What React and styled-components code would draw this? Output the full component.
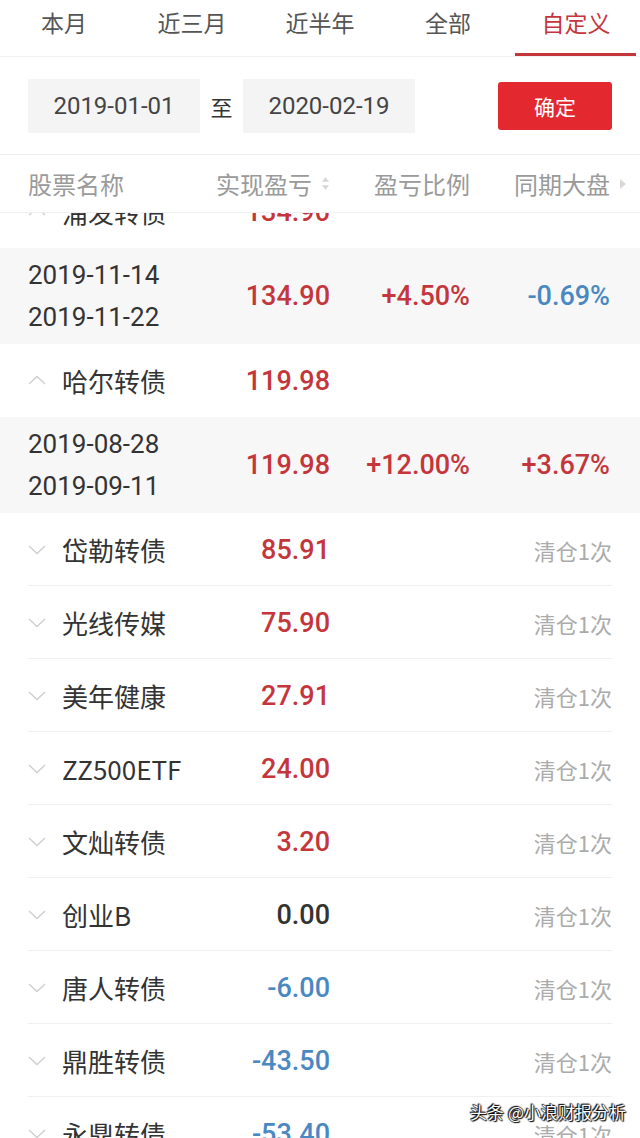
import styled, { createGlobalStyle } from "styled-components";

const GlobalStyle = createGlobalStyle`
  html, body {
    margin: 0;
    padding: 0;
    background: #ffffff;
  }
  body {
    font-family: "Noto Sans CJK SC", "Noto Sans", sans-serif;
    color: #333333;
  }
`;

const RED = "#c4363c";
const BLUE = "#4a88c2";
const NUM_FONT = `Roboto, "Noto Sans", sans-serif`;

const tabs = ["本月", "近三月", "近半年", "全部", "自定义"];

const stocks = [
  { name: "岱勒转债", value: "85.91", tone: "up" },
  { name: "光线传媒", value: "75.90", tone: "up" },
  { name: "美年健康", value: "27.91", tone: "up" },
  { name: "ZZ500ETF", value: "24.00", tone: "up" },
  { name: "文灿转债", value: "3.20", tone: "up" },
  { name: "创业B", value: "0.00", tone: "flat" },
  { name: "唐人转债", value: "-6.00", tone: "down" },
  { name: "鼎胜转债", value: "-43.50", tone: "down" },
  { name: "永鼎转债", value: "-53.40", tone: "down" },
];

const toneColor = (tone) =>
  tone === "up" ? RED : tone === "down" ? BLUE : "#333333";

const Chevron = ({ up }) => (
  <ChevronSvg viewBox="0 0 18 10" $up={up}>
    <path
      d={up ? "M1 9 L9 1.5 L17 9" : "M1 1 L9 8.5 L17 1"}
      fill="none"
      stroke="#cfcfcf"
      strokeWidth="1.4"
    />
  </ChevronSvg>
);

const App = () => {
  return (
    <>
      <GlobalStyle />
      <Page>
        <TabBar>
          {tabs.map((t, i) => (
            <Tab key={t} $active={i === tabs.length - 1}>
              {t}
            </Tab>
          ))}
        </TabBar>

        <DateBar>
          <DateBox>2019-01-01</DateBox>
          <To>至</To>
          <DateBox>2020-02-19</DateBox>
          <ConfirmBtn>确定</ConfirmBtn>
        </DateBar>

        <HeaderRow>
          <HeadCell>股票名称</HeadCell>
          <HeadCell $align="right">
            实现盈亏
            <SortIcon viewBox="0 0 10 16">
              <path d="M5 1 L9 6 L1 6 Z" fill="#d6d6d6" />
              <path d="M5 15 L9 10 L1 10 Z" fill="#d6d6d6" />
            </SortIcon>
          </HeadCell>
          <HeadCell $align="right">盈亏比例</HeadCell>
          <HeadCell $align="right" $hang>
            同期大盘
            <MoreIcon viewBox="0 0 6 10">
              <path d="M0 0 L6 5 L0 10 Z" fill="#d9d9d9" />
            </MoreIcon>
          </HeadCell>
        </HeaderRow>

        <List>
          <StockRow $cut>
            <NameCell>
              <Chevron up />
              <Name>浦发转债</Name>
            </NameCell>
            <Value color={RED}>134.90</Value>
          </StockRow>
          <DetailRow>
            <Dates>
              <span>2019-11-14</span>
              <span>2019-11-22</span>
            </Dates>
            <Value color={RED}>134.90</Value>
            <Value color={RED}>+4.50%</Value>
            <Value color={BLUE}>-0.69%</Value>
          </DetailRow>

          <StockRow>
            <NameCell>
              <Chevron up />
              <Name>哈尔转债</Name>
            </NameCell>
            <Value color={RED}>119.98</Value>
          </StockRow>
          <DetailRow>
            <Dates>
              <span>2019-08-28</span>
              <span>2019-09-11</span>
            </Dates>
            <Value color={RED}>119.98</Value>
            <Value color={RED}>+12.00%</Value>
            <Value color={RED}>+3.67%</Value>
          </DetailRow>

          {stocks.map((s, i) => (
            <StockRow key={s.name} $divided={i < stocks.length - 1}>
              <NameCell>
                <Chevron />
                <Name>{s.name}</Name>
              </NameCell>
              <Value color={toneColor(s.tone)}>{s.value}</Value>
              <span />
              <Cleared>清仓1次</Cleared>
            </StockRow>
          ))}
        </List>

        <Watermark>头条 @小浪财报分析</Watermark>
      </Page>
    </>
  );
};

export default App;

const Page = styled.div`
  position: relative;
  display: flex;
  flex-direction: column;
  width: 640px;
  height: 1138px;
  overflow: hidden;
  background: #ffffff;
`;

const TabBar = styled.div`
  display: flex;
  flex-shrink: 0;
  height: 57px;
  border-bottom: 1px solid #f0f0f0;
  box-sizing: border-box;
`;

const Tab = styled.div`
  position: relative;
  flex: 1;
  text-align: center;
  padding-top: 8px;
  font-size: 23px;
  line-height: 28px;
  color: ${({ $active }) => ($active ? RED : "#555555")};

  &:after {
    content: "";
    display: ${({ $active }) => ($active ? "block" : "none")};
    position: absolute;
    left: 3px;
    right: 4px;
    bottom: 0;
    height: 3px;
    background: ${RED};
  }
`;

const DateBar = styled.div`
  display: flex;
  flex-shrink: 0;
  align-items: center;
  height: 98px;
  padding: 0 28px;
  box-sizing: border-box;
  border-bottom: 1px solid #eeeeee;
`;

const DateBox = styled.div`
  width: 172px;
  height: 54px;
  display: flex;
  align-items: center;
  justify-content: center;
  background: #f4f4f4;
  font-family: ${NUM_FONT};
  font-size: 24px;
  color: #444444;
`;

const To = styled.div`
  width: 43px;
  text-align: center;
  font-size: 22px;
  color: #333333;
`;

const ConfirmBtn = styled.button`
  margin-left: auto;
  width: 114px;
  height: 48px;
  border: none;
  border-radius: 3px;
  background: #e3282f;
  color: #ffffff;
  font-family: "Noto Sans CJK SC", sans-serif;
  font-size: 21px;
  padding: 0;
`;

const rowGrid = `
  display: grid;
  grid-template-columns: 172px 130px 140px 1fr;
  align-items: center;
  padding: 0 30px 0 28px;
  box-sizing: border-box;
`;

const HeaderRow = styled.div`
  ${rowGrid}
  flex-shrink: 0;
  height: 58px;
  background: #ffffff;
  border-bottom: 1px solid #f0f0f0;
`;

const HeadCell = styled.div`
  display: flex;
  align-items: center;
  justify-content: ${({ $align }) => ($align === "right" ? "flex-end" : "flex-start")};
  margin-right: ${({ $hang }) => ($hang ? "-16px" : "0")};
  font-size: 24px;
  color: #9a9a9a;
  white-space: nowrap;
`;

const SortIcon = styled.svg`
  width: 9px;
  height: 15px;
  margin-left: 9px;
`;

const MoreIcon = styled.svg`
  width: 6px;
  height: 10px;
  margin-left: 10px;
`;

const List = styled.div`
  flex: 1;
  min-height: 0;
  display: flex;
  flex-direction: column;
  overflow: hidden;
`;

const StockRow = styled.div`
  ${rowGrid}
  position: relative;
  height: 73px;
  flex-shrink: 0;
  margin-top: ${({ $cut }) => ($cut ? "-38px" : "0")};

  &:after {
    content: "";
    display: ${({ $divided }) => ($divided ? "block" : "none")};
    position: absolute;
    left: 28px;
    right: 28px;
    bottom: 0;
    height: 1px;
    background: #f0f0f0;
  }
`;

const NameCell = styled.div`
  display: flex;
  align-items: center;
  white-space: nowrap;
`;

const ChevronSvg = styled.svg`
  width: 18px;
  height: 10px;
  margin-right: 16px;
  margin-top: ${({ $up }) => ($up ? "-2px" : "0")};
`;

const Name = styled.span`
  font-size: 26px;
  color: #333333;
`;

const Value = styled.div`
  text-align: right;
  font-family: ${NUM_FONT};
  font-size: 27px;
  font-weight: 500;
  color: ${({ color }) => color};
  white-space: nowrap;
`;

const DetailRow = styled.div`
  ${rowGrid}
  height: 96px;
  flex-shrink: 0;
  background: #f7f7f7;
`;

const Dates = styled.div`
  display: flex;
  flex-direction: column;
  font-family: ${NUM_FONT};
  font-size: 26px;
  line-height: 42px;
  color: #333333;
  white-space: nowrap;
`;

const Cleared = styled.div`
  text-align: right;
  margin-right: -2px;
  font-size: 22px;
  color: #ababab;
  white-space: nowrap;
`;

const Watermark = styled.div`
  position: absolute;
  right: 14px;
  bottom: 14px;
  font-size: 17px;
  color: #ffffff;
  text-shadow: 0 0 1px #000, 0 0 2px #000, 1px 1px 1px #000, -1px -1px 1px #000;
`;
